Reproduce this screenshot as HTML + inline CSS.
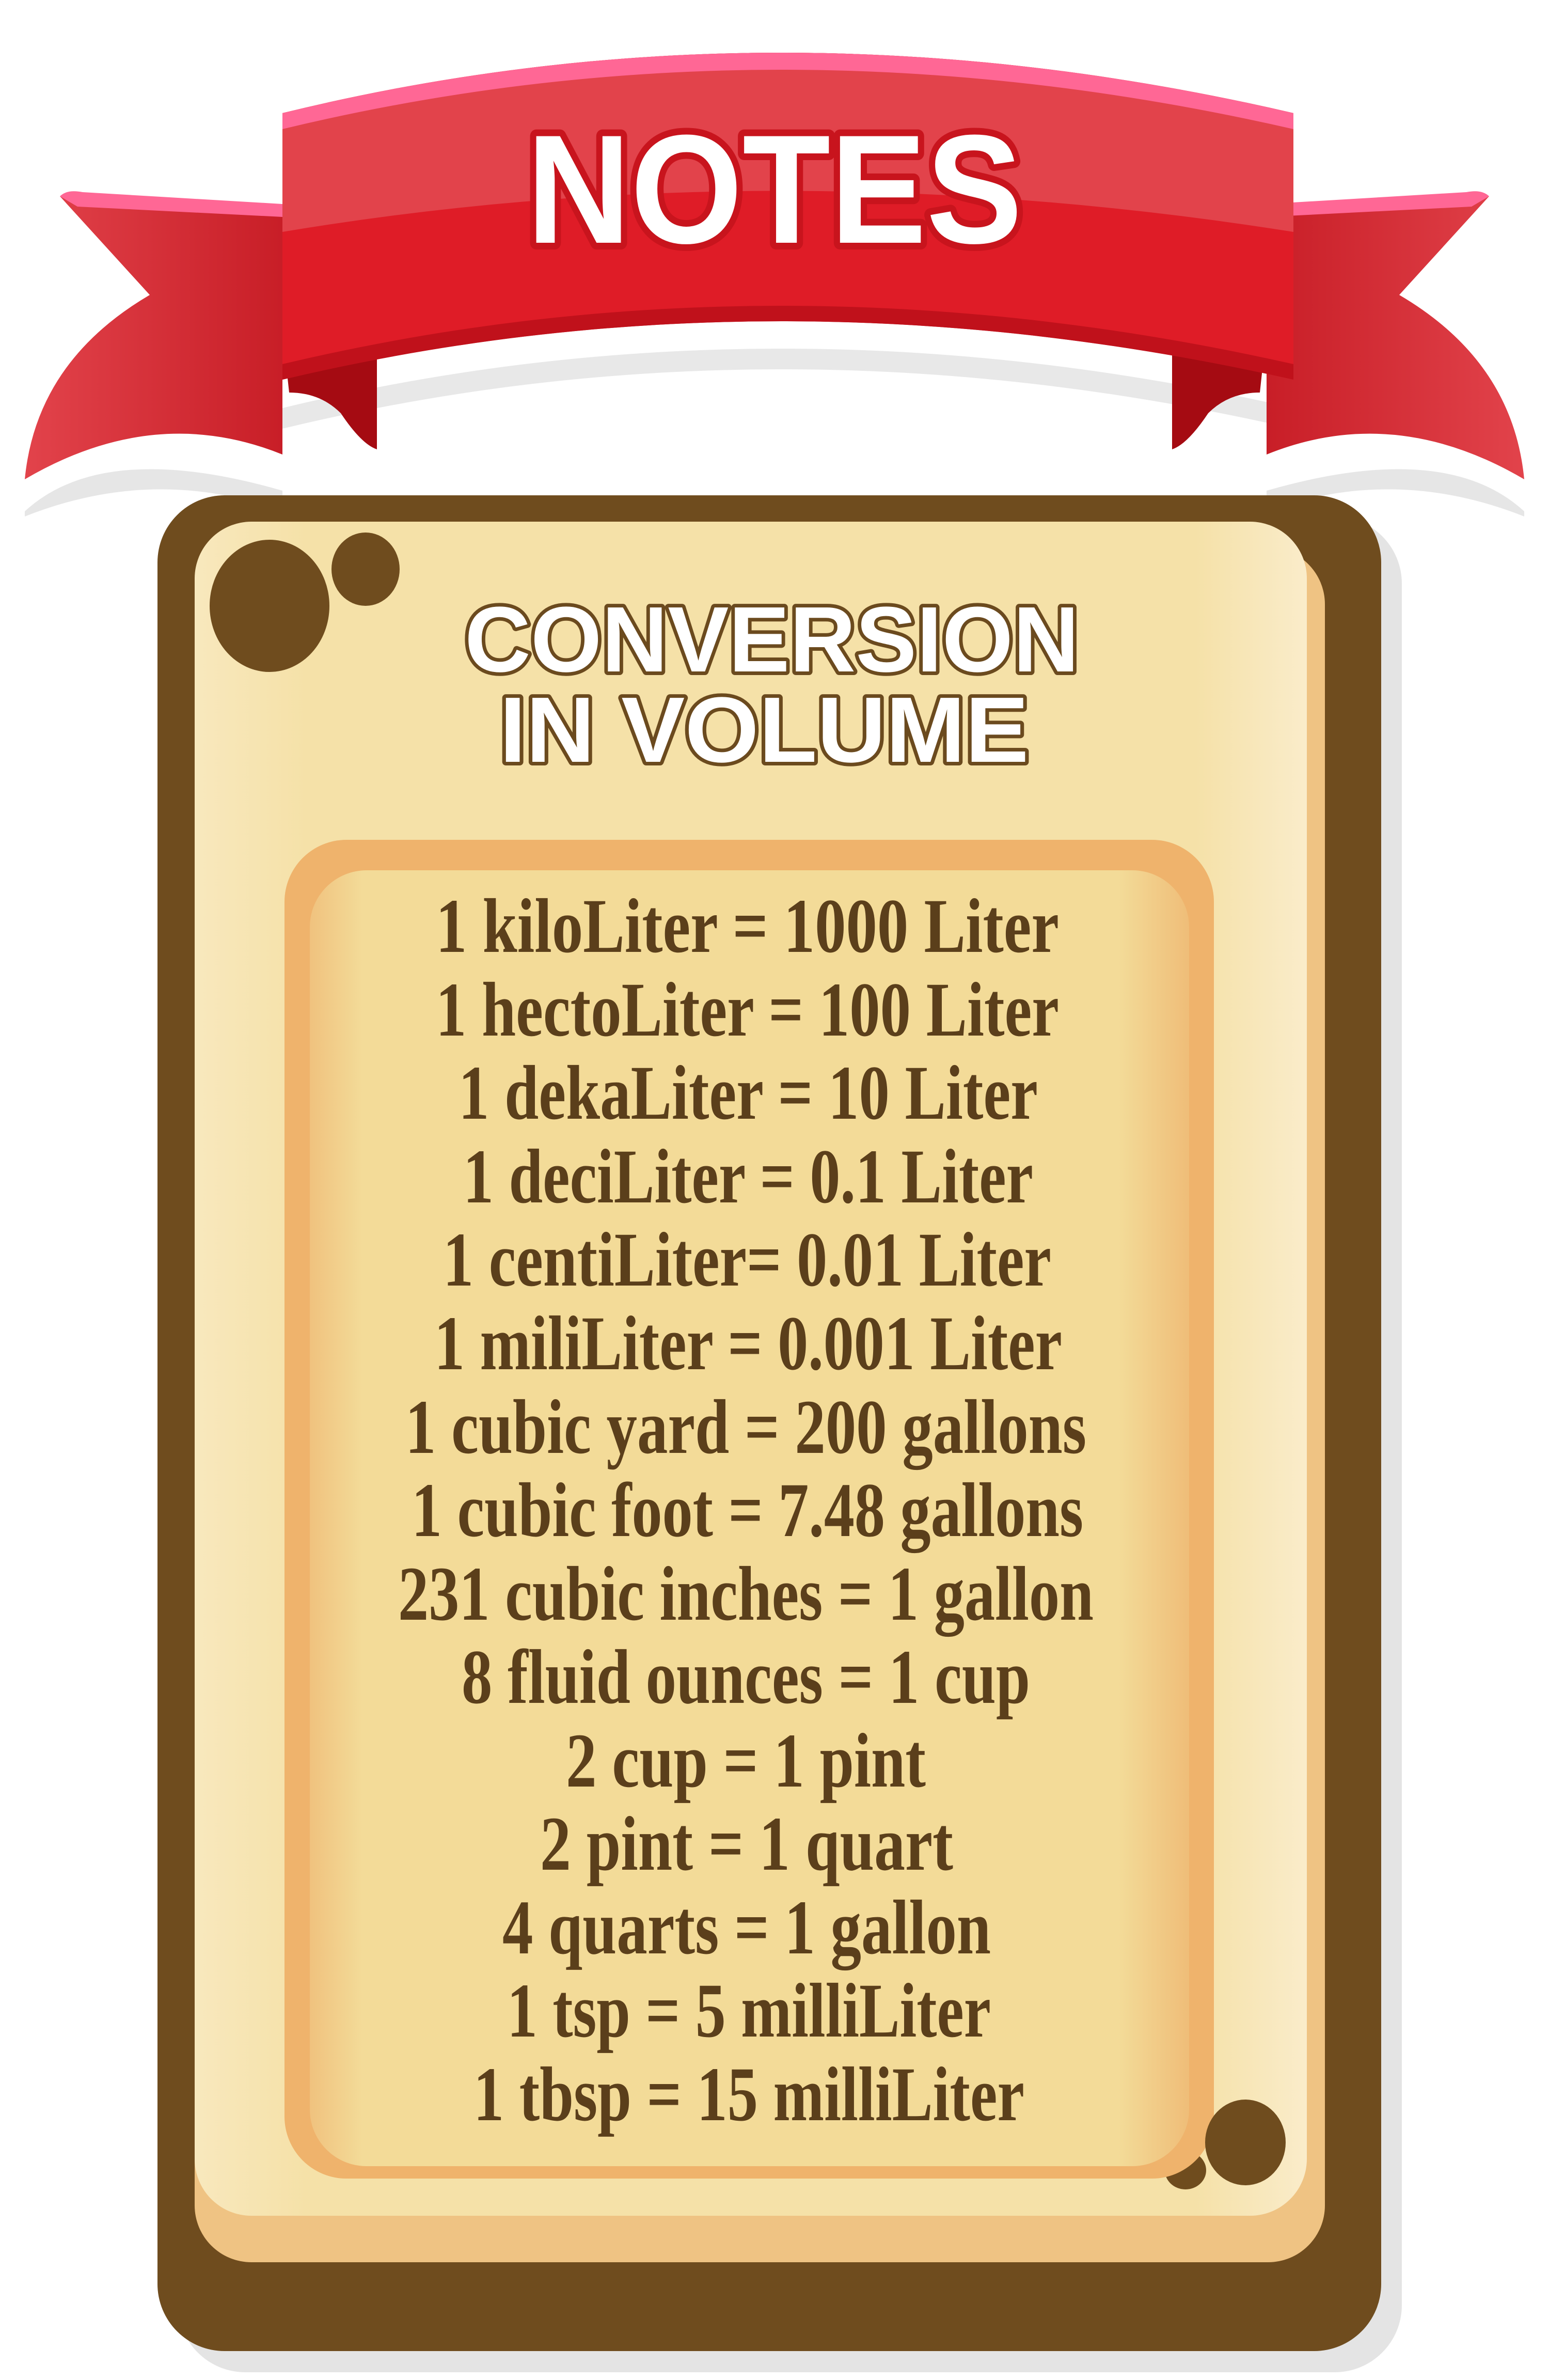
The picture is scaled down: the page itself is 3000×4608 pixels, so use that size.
<!DOCTYPE html>
<html><head><meta charset="utf-8"><style>
html,body{margin:0;padding:0;background:#fff;}
svg{display:block}
</style></head><body>
<svg width="3000" height="4608" viewBox="0 0 3000 4608" xmlns="http://www.w3.org/2000/svg">
<defs>
<linearGradient id="tailL" x1="0" y1="0" x2="1" y2="0"><stop offset="0" stop-color="#e2434b"/><stop offset="1" stop-color="#c81e27"/></linearGradient>
<linearGradient id="tailR" x1="1" y1="0" x2="0" y2="0"><stop offset="0" stop-color="#e2434b"/><stop offset="1" stop-color="#c81e27"/></linearGradient>
<linearGradient id="cream" x1="0" y1="0" x2="1" y2="0"><stop offset="0" stop-color="#f8e8bd"/><stop offset="0.1" stop-color="#f5e1a8"/><stop offset="0.9" stop-color="#f5e1a8"/><stop offset="1" stop-color="#faecca"/></linearGradient>
<linearGradient id="inner" x1="0" y1="0" x2="1" y2="0"><stop offset="0" stop-color="#f0c27e"/><stop offset="0.06" stop-color="#f3db98"/><stop offset="0.92" stop-color="#f3db98"/><stop offset="1" stop-color="#efbd78"/></linearGradient>
</defs>
<path d="M48,990 Q200,850 547,950 L547,990 Q300,900 48,1000Z" fill="#e6e6e6"/>
<path d="M2952,990 Q2800,850 2453,950 L2453,990 Q2700,900 2952,1000Z" fill="#e6e6e6"/>
<path d="M547,790 Q1500,560 2505,790 L2505,830 Q1500,600 547,830Z" fill="#e8e8e8"/>
<path d="M116,380 L547,410 L547,880 Q300,780 48,928 Q70,700 290,571 Z" fill="url(#tailL)"/>
<path d="M116,380 Q130,366 160,372 L547,395 L547,420 L150,400 Z" fill="#ff6795"/>
<path d="M2884,380 L2453,410 L2453,880 Q2700,780 2952,928 Q2930,700 2710,571 Z" fill="url(#tailR)"/>
<path d="M2884,380 Q2870,366 2840,372 L2453,395 L2453,420 L2850,400 Z" fill="#ff6795"/>
<path d="M547,640 L730,660 L730,870 Q700,860 660,800 Q620,760 560,760 Z" fill="#a50b12"/>
<path d="M2453,640 L2270,660 L2270,870 Q2300,860 2340,800 Q2380,760 2440,760 Z" fill="#a50b12"/>
<path d="M547,219 Q1500,-15 2505,219 L2505,735 Q1500,509 547,735 Z" fill="#df1c27"/>
<path d="M547,219 Q1500,-15 2505,219 L2505,449 Q1500,290 547,449 Z" fill="#e2434b"/>
<path d="M547,219 Q1500,-15 2505,219 L2505,250 Q1500,20 547,250 Z" fill="#ff6795"/>
<path d="M547,705 Q1500,479 2505,705 L2505,735 Q1500,509 547,735 Z" fill="#c0111b"/>
<text x="1500" y="470" text-anchor="middle" font-family="Liberation Sans, sans-serif" font-weight="bold" font-size="300" textLength="960" lengthAdjust="spacingAndGlyphs" fill="#fff" stroke="#c8141d" stroke-width="26" paint-order="stroke" stroke-linejoin="round">NOTES</text>
<rect x="345" y="1000" width="2370" height="3593" rx="130" fill="#e4e4e4"/>
<rect x="305" y="959" width="2370" height="3593" rx="130" fill="#6f4c1e"/>
<rect x="377" y="1060" width="2189" height="3320" rx="110" fill="#efc383"/>
<rect x="377" y="1010" width="2154" height="3280" rx="110" fill="url(#cream)"/>
<ellipse cx="522" cy="1173" rx="116" ry="128" fill="#6f4c1e"/>
<ellipse cx="708" cy="1102" rx="66" ry="71" fill="#6f4c1e"/>
<text x="1495" y="1300" text-anchor="middle" font-family="Liberation Sans, sans-serif" font-weight="bold" font-size="180" textLength="1190" lengthAdjust="spacingAndGlyphs" fill="#fff" stroke="#6b4a1e" stroke-width="14" paint-order="stroke" stroke-linejoin="round">CONVERSION</text>
<text x="1480" y="1475" text-anchor="middle" font-family="Liberation Sans, sans-serif" font-weight="bold" font-size="180" textLength="1025" lengthAdjust="spacingAndGlyphs" fill="#fff" stroke="#6b4a1e" stroke-width="14" paint-order="stroke" stroke-linejoin="round">IN VOLUME</text>
<ellipse cx="2296" cy="4202" rx="40" ry="37" fill="#6f4c1e"/>
<rect x="551" y="1626" width="1800" height="2592" rx="120" fill="#efb36c"/>
<rect x="600" y="1685" width="1703" height="2509" rx="110" fill="url(#inner)"/>
<ellipse cx="2412" cy="4148" rx="78" ry="83" fill="#6f4c1e"/>
<g font-family="Liberation Serif, serif" font-weight="bold" font-size="150" fill="#5b3f1b" transform="translate(0,12)">
<text x="844" y="1831" textLength="1207" lengthAdjust="spacingAndGlyphs">1 kiloLiter  = 1000 Liter</text>
<text x="844" y="1993" textLength="1207" lengthAdjust="spacingAndGlyphs">1 hectoLiter = 100 Liter</text>
<text x="888" y="2154" textLength="1122" lengthAdjust="spacingAndGlyphs">1 dekaLiter = 10 Liter</text>
<text x="897" y="2316" textLength="1104" lengthAdjust="spacingAndGlyphs">1 deciLiter = 0.1 Liter</text>
<text x="858" y="2477" textLength="1178" lengthAdjust="spacingAndGlyphs">1 centiLiter= 0.01 Liter</text>
<text x="841" y="2639" textLength="1216" lengthAdjust="spacingAndGlyphs">1 miliLiter = 0.001 Liter</text>
<text x="785" y="2801" textLength="1319" lengthAdjust="spacingAndGlyphs">1 cubic yard = 200 gallons</text>
<text x="797" y="2962" textLength="1301" lengthAdjust="spacingAndGlyphs">1 cubic foot = 7.48 gallons</text>
<text x="771" y="3124" textLength="1347" lengthAdjust="spacingAndGlyphs">231 cubic inches = 1 gallon</text>
<text x="894" y="3285" textLength="1101" lengthAdjust="spacingAndGlyphs">8 fluid ounces = 1 cup</text>
<text x="1096" y="3447" textLength="697" lengthAdjust="spacingAndGlyphs">2 cup = 1 pint</text>
<text x="1046" y="3608" textLength="800" lengthAdjust="spacingAndGlyphs">2 pint = 1 quart</text>
<text x="973" y="3770" textLength="946" lengthAdjust="spacingAndGlyphs">4 quarts = 1 gallon</text>
<text x="982" y="3931" textLength="937" lengthAdjust="spacingAndGlyphs">1 tsp = 5 milliLiter</text>
<text x="917" y="4093" textLength="1067" lengthAdjust="spacingAndGlyphs">1 tbsp = 15 milliLiter</text>
</g>
</svg>
</body></html>
